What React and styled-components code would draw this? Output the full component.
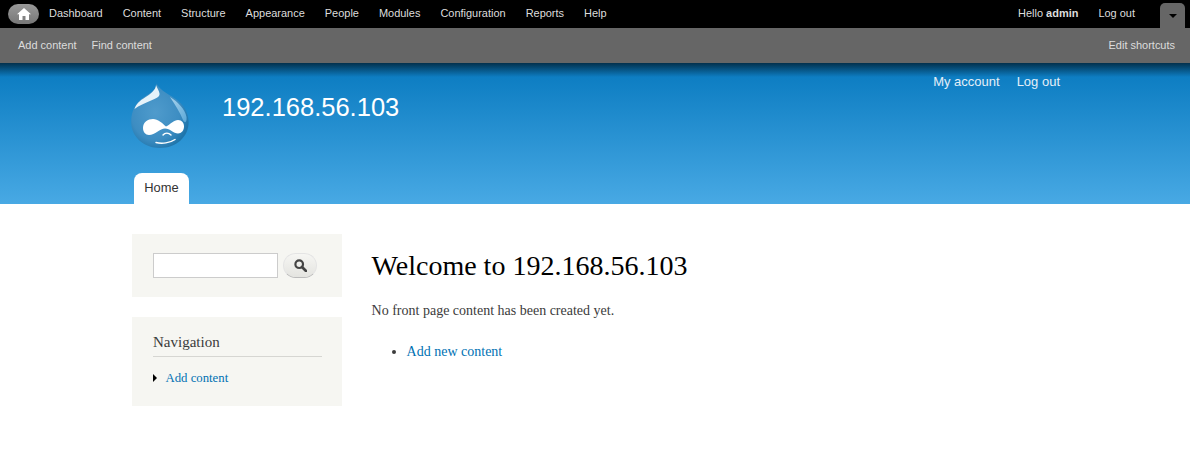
import React from 'react'
import styled, { createGlobalStyle } from 'styled-components'

const GlobalStyle = createGlobalStyle`
  html, body {
    margin: 0;
    padding: 0;
    background: #fff;
    font-family: 'Liberation Serif', Georgia, serif;
    overflow: hidden;
  }
`

const Toolbar = styled.div`
  display: flex;
  align-items: center;
  height: 28px;
  padding: 0 5px 2px 8px;
  box-sizing: border-box;
  background: #000;
  font-family: 'Liberation Sans', Arial, sans-serif;
  font-size: 10.97px;
  color: #ddd;
`

const HomeButton = styled.div`
  display: flex;
  align-items: center;
  justify-content: center;
  width: 31px;
  height: 20px;
  margin: 2px 10px 0 0;
  border-radius: 10px;
  background: linear-gradient(#999, #777);
`

const ToolbarLink = styled.span`
  margin-right: 20px;
  white-space: nowrap;
`

const Fill = styled.div`
  flex-grow: 1;
`

const Toggle = styled.div`
  display: flex;
  align-items: center;
  justify-content: center;
  align-self: flex-end;
  width: 25px;
  height: 25px;
  margin: 0 0 -2px 5px;
  background: #666;
  border-radius: 5px 5px 0 0;
`

const Arrow = styled.div`
  width: 0;
  height: 0;
  margin-top: 1px;
  border-left: 4px solid transparent;
  border-right: 4px solid transparent;
  border-top: 4px solid #000;
`

const Shortcuts = styled.div`
  display: flex;
  align-items: center;
  height: 35px;
  padding: 0 15px 1px 18px;
  box-sizing: border-box;
  background: #666;
  font-family: 'Liberation Sans', Arial, sans-serif;
  font-size: 10.97px;
  color: #ddd;
`

const ShortcutLink = styled.span`
  margin-right: 15px;
  white-space: nowrap;
`

const EditLink = styled.span`
  white-space: nowrap;
`

const Header = styled.header`
  position: relative;
  height: 141px;
  background: linear-gradient(#0779bf, #48a9e4);
  font-family: 'Liberation Sans', Arial, sans-serif;
  &::before {
    content: '';
    position: absolute;
    left: 0;
    right: 0;
    top: 0;
    height: 14px;
    background: linear-gradient(rgba(0, 0, 0, 0.6), rgba(0, 0, 0, 0));
  }
`

const HeaderInner = styled.div`
  display: flex;
  flex-direction: column;
  width: 930px;
  height: 100%;
  margin-left: 130px;
`

const HeaderTop = styled.div`
  display: flex;
  align-items: flex-start;
  height: 110px;
`

const Logo = styled.svg`
  display: block;
  width: 60px;
  height: 67px;
  margin-top: 19px;
`

const SiteName = styled.div`
  margin: 27px 0 0 32px;
  font-size: 25.5px;
  line-height: 34px;
  color: #fff;
`

const AccountMenu = styled.div`
  display: flex;
  gap: 17px;
  margin-top: 11px;
  font-size: 13px;
  line-height: 16px;
  color: #e4eff8;
`

const Tab = styled.div`
  display: flex;
  align-items: center;
  justify-content: center;
  width: 55px;
  height: 31px;
  margin-left: 4px;
  padding-bottom: 2px;
  box-sizing: border-box;
  background: #fff;
  border-radius: 8px 8px 0 0;
  font-size: 12.9px;
  color: #333;
`

const Main = styled.div`
  display: flex;
  margin: 30px 0 0 132px;
`

const Sidebar = styled.aside`
  display: flex;
  flex-direction: column;
  gap: 20px;
  width: 209.6px;
`

const SearchBlock = styled.div`
  display: flex;
  align-items: center;
  height: 63px;
  padding: 0 21px;
  box-sizing: border-box;
  background: #f6f6f2;
`

const SearchInput = styled.input`
  width: 125px;
  height: 25px;
  box-sizing: border-box;
  margin: 0 5px 0 0;
  padding: 0;
  border: 1px solid #ccc;
  background: #fff;
`

const SearchButton = styled.div`
  display: flex;
  align-items: center;
  justify-content: center;
  width: 34px;
  height: 25px;
  box-sizing: border-box;
  border: 1px solid #e4e4e4;
  border-bottom-color: #bbb;
  border-radius: 13px;
  background: linear-gradient(#f6f6f3, #e4e4e0);
`

const NavBlock = styled.div`
  height: 89px;
  padding: 16px 20px 0 21px;
  box-sizing: border-box;
  background: #f6f6f2;
`

const BlockTitle = styled.h2`
  margin: 0;
  padding-bottom: 4px;
  border-bottom: 1px solid #d6d6d2;
  font-size: 15px;
  line-height: 19px;
  font-weight: 400;
  color: #3b3b3b;
`

const NavItem = styled.div`
  display: flex;
  align-items: center;
  margin-top: 13px;
  font-size: 12.75px;
  line-height: 16px;
  color: #0071b3;
`

const NavArrow = styled.span`
  width: 0;
  height: 0;
  margin-right: 8.5px;
  border-top: 4px solid transparent;
  border-bottom: 4px solid transparent;
  border-left: 4px solid #000;
`

const Content = styled.main`
  margin-left: 30px;
`

const Title = styled.h1`
  margin: 15px 0 0;
  font-size: 28px;
  line-height: 34px;
  font-weight: 400;
  color: #000;
`

const Paragraph = styled.p`
  margin: 17px 0 0;
  font-size: 14px;
  line-height: 21px;
  color: #3b3b3b;
`

const List = styled.ul`
  margin: 20px 0 0;
  padding-left: 35px;
  font-size: 14px;
  line-height: 21px;
  color: #3b3b3b;
`

const ContentLink = styled.a`
  color: #0071b3;
  text-decoration: none;
`

function HomeIcon() {
  return (
    <svg width="14" height="12" viewBox="0 0 14 12">
      <path d="M7 0 L14 6.2 L12 6.2 L12 12 L8.5 12 L8.5 8 L5.5 8 L5.5 12 L2 12 L2 6.2 L0 6.2 Z" fill="#fff" />
    </svg>
  )
}

function SearchIcon() {
  return (
    <svg width="13" height="13" viewBox="0 0 13 13">
      <circle cx="5.2" cy="5.2" r="3.8" fill="none" stroke="#444" strokeWidth="2.2" />
      <path d="M8 8 L12 12" stroke="#444" strokeWidth="2.6" strokeLinecap="round" />
    </svg>
  )
}

function DrupalLogo() {
  return (
    <Logo viewBox="0 0 60 67">
      <defs>
        <radialGradient id="drop" cx="42%" cy="45%" r="60%">
          <stop offset="0%" stopColor="#4f9bcc" />
          <stop offset="70%" stopColor="#3d8dc2" />
          <stop offset="100%" stopColor="#1f75ab" />
        </radialGradient>
        <linearGradient id="shine" x1="0" y1="0" x2="1" y2="1">
          <stop offset="0%" stopColor="#a9d3ec" />
          <stop offset="100%" stopColor="#5ba8d8" />
        </linearGradient>
      </defs>
      <path d="M26.5 1.5 C29 7 36 11 42 14.5 C51 20 58.5 28 58.6 40 C58.8 55 46 66 30 66 C14 66 1.3 55 1.2 40 C1 28 7 19 15 14.5 C20 11.5 26 8 26.5 1.5 Z" fill="url(#drop)" />
      <path d="M40 15 C48 20 55 27 56.5 35 C57 40 55 42 53 38 C50 30 45 23 40 15 Z" fill="url(#shine)" />
      <path d="M26 3 C26 8 20 12.5 15 15.5 C10 18.5 6 22 4.5 27 C9 23.5 15 21 21 18.5 C26 16.5 30 15 29.5 11.5 C29 8.5 27 6 26 3 Z" fill="#e6f3fa" />
      <path d="M13 46 C13 40 18 37 23 37 C28 37 32 41 36 44.5 C40 42.5 44 38 48 38 C52 38 54 41 54 44.5 C54 48.5 51.5 51.5 48 51.5 C43.5 51.5 40 46.5 35 46.5 C30 46.5 25 53 19 53 C15.5 53 13 50 13 46 Z" fill="#fff" />
      <path d="M33 53 C35 50.5 38.5 50.5 41 53" fill="none" stroke="#fff" strokeWidth="1.4" strokeLinecap="round" />
      <path d="M26 60.5 C32 62 40 61 45 57.5" fill="none" stroke="#fff" strokeWidth="1.5" strokeLinecap="round" />
    </Logo>
  )
}

const menuItems = [
  'Dashboard',
  'Content',
  'Structure',
  'Appearance',
  'People',
  'Modules',
  'Configuration',
  'Reports',
  'Help',
]

export default function App() {
  return (
    <>
      <GlobalStyle />
      <Toolbar>
        <HomeButton>
          <HomeIcon />
        </HomeButton>
        {menuItems.map((item) => (
          <ToolbarLink key={item}>{item}</ToolbarLink>
        ))}
        <Fill />
        <ToolbarLink>
          Hello <b>admin</b>
        </ToolbarLink>
        <ToolbarLink>Log out</ToolbarLink>
        <Toggle>
          <Arrow />
        </Toggle>
      </Toolbar>
      <Shortcuts>
        <ShortcutLink>Add content</ShortcutLink>
        <ShortcutLink>Find content</ShortcutLink>
        <Fill />
        <EditLink>Edit shortcuts</EditLink>
      </Shortcuts>
      <Header>
        <HeaderInner>
          <HeaderTop>
            <DrupalLogo />
            <SiteName>192.168.56.103</SiteName>
            <Fill />
            <AccountMenu>
              <span>My account</span>
              <span>Log out</span>
            </AccountMenu>
          </HeaderTop>
          <Tab>Home</Tab>
        </HeaderInner>
      </Header>
      <Main>
        <Sidebar>
          <SearchBlock>
            <SearchInput />
            <SearchButton>
              <SearchIcon />
            </SearchButton>
          </SearchBlock>
          <NavBlock>
            <BlockTitle>Navigation</BlockTitle>
            <NavItem>
              <NavArrow />
              Add content
            </NavItem>
          </NavBlock>
        </Sidebar>
        <Content>
          <Title>Welcome to 192.168.56.103</Title>
          <Paragraph>No front page content has been created yet.</Paragraph>
          <List>
            <li>
              <ContentLink>Add new content</ContentLink>
            </li>
          </List>
        </Content>
      </Main>
    </>
  )
}
